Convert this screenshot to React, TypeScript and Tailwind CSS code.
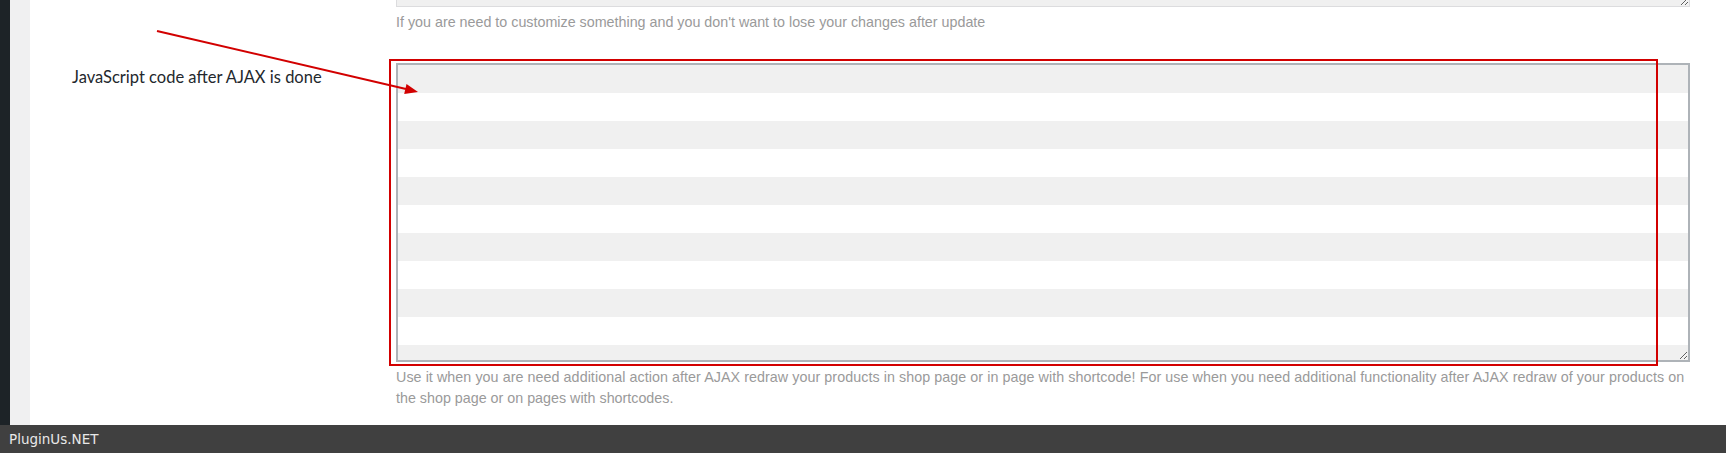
import React from "react";

const stripes =
  "bg-[repeating-linear-gradient(to_bottom,#f0f0f0_0px,#f0f0f0_28px,#ffffff_28px,#ffffff_56px)]";

export default function App() {
  return (
    <div className="relative flex h-[453px] w-full flex-col overflow-hidden bg-white">
      <div className="flex min-h-0 flex-1">
        <div className="w-[10px] bg-[#1d2327]" />
        <div className="w-[20px] bg-[#f0f0f1]" />

        <div className="flex-1">
          {/* previous option, cut off at the top */}
          <div className="flex">
            <div className="w-[366px] shrink-0" />
            <div className="w-[1294px]">
              <textarea
                readOnly
                className="-mt-[50px] block h-[57px] w-full border border-[#dcdcde] bg-[#f0f0f0] outline-none"
              />
              <p className="mt-[5px] whitespace-nowrap font-['Liberation_Sans',sans-serif] text-[14.3px] leading-[20px] text-[#9a9a9a]">
                If you are need to customize something and you don't want to lose your changes after update
              </p>
            </div>
          </div>

          {/* js after ajax option */}
          <div className="mt-[31px] flex">
            <div className="w-[366px] shrink-0 pl-[42px] pt-[2px]">
              <label className="font-['Lato',sans-serif] text-[16.5px] leading-[22px] text-[#23282d]">
                JavaScript code after AJAX is done
              </label>
            </div>
            <div className="w-[1294px]">
              <textarea
                readOnly
                className={`block h-[299px] w-full border-2 border-[#aeb3b8] outline-none ${stripes}`}
              />
              <p className="mt-[5px] font-['Liberation_Sans',sans-serif] text-[14.3px] leading-[21px] text-[#9a9a9a]">
                <span className="block whitespace-nowrap tracking-[0.06px]">
                  Use it when you are need additional action after AJAX redraw your products in shop page or in page with shortcode! For use when you need additional functionality after AJAX redraw of your products on
                </span>
                <span className="block whitespace-nowrap">the shop page or on pages with shortcodes.</span>
              </p>
            </div>
          </div>
        </div>
      </div>

      <div className="flex h-[28px] shrink-0 items-center bg-[#404040] pl-[9px]">
        <span className="font-['DejaVu_Sans',sans-serif] text-[13.5px] text-[#e8e8e8]">PluginUs.NET</span>
      </div>

      {/* annotation overlay */}
      <div className="pointer-events-none absolute left-[389px] top-[59px] h-[307px] w-[1269px] border-2 border-[#d20000]" />
      <svg
        className="pointer-events-none absolute left-0 top-0"
        width="1726"
        height="453"
        viewBox="0 0 1726 453"
      >
        <line x1="157" y1="31" x2="406" y2="89" stroke="#d20000" strokeWidth="2" />
        <polygon points="418,92 404.2,94 406.5,84" fill="#d20000" />
      </svg>
    </div>
  );
}
